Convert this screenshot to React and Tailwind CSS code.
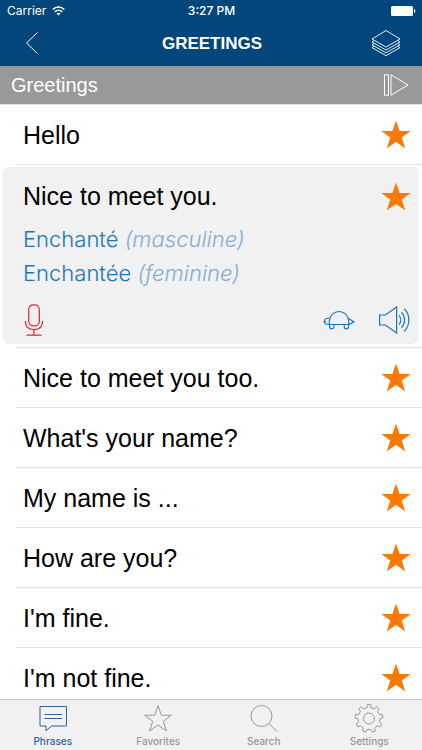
import { useState } from 'react';
import clsx from 'clsx';

const STAR = 'M15 0.5 L18.6 11 L29.7 11 L20.8 17.6 L24.2 28.5 L15 21.8 L5.8 28.5 L9.2 17.6 L0.3 11 L11.4 11 Z';

const initialPhrases = [
    { id: 1, text: 'Hello' },
    {
        id: 2,
        text: 'Nice to meet you.',
        translations: [
            { text: 'Enchanté', note: '(masculine)' },
            { text: 'Enchantée', note: '(feminine)' },
        ],
    },
    { id: 3, text: 'Nice to meet you too.' },
    { id: 4, text: "What's your name?" },
    { id: 5, text: 'My name is ...' },
    { id: 6, text: 'How are you?' },
    { id: 7, text: "I'm fine." },
    { id: 8, text: "I'm not fine." },
];

// outline of a cog wheel, first tooth pointing up
const gearPath = (cx, cy, teeth, outer, inner) => {
    const step = 360 / teeth;
    const points = [];
    for (let i = 0; i < teeth; i++) {
        [
            [-0.25, inner],
            [-0.17, outer],
            [0.17, outer],
            [0.25, inner],
            [0.5, inner - 0.3],
        ].forEach(([offset, r]) => {
            const a = ((i + offset) * step * Math.PI) / 180;
            points.push(`${(cx + r * Math.sin(a)).toFixed(2)} ${(cy - r * Math.cos(a)).toFixed(2)}`);
        });
    }
    return `M${points.join(' L')} Z`;
};

const StatusBar = () => (
    <div className="grid grid-cols-3 items-center h-[22px] pl-[7px] pr-[6px] font-['Inter',sans-serif] text-xs text-white">
        <div className="flex items-center gap-[6px]">
            <span>Carrier</span>
            <svg className="w-[13px] h-[10px]" viewBox="0 0 13 10" fill="none" stroke="currentColor" strokeWidth="1.6">
                <path d="M0.7 3.5 C4 0.2 9 0.2 12.3 3.5" />
                <path d="M2.9 5.9 C5 3.9 8 3.9 10.1 5.9" />
                <path d="M6.5 9.6 L4.5 7.6 C5.6 6.6 7.4 6.6 8.5 7.6 Z" fill="currentColor" stroke="none" />
            </svg>
        </div>
        <span className="text-center font-medium">3:27 PM</span>
        <svg className="w-[25px] h-[10px] justify-self-end" viewBox="0 0 25 10" fill="currentColor">
            <rect width="22" height="10" rx="1.5" />
            <path d="M23 3 C24.8 3.4 24.8 6.6 23 7 Z" />
        </svg>
    </div>
);

const Header = () => (
    <header className="bg-[#03467c] shrink-0">
        <StatusBar />
        <div className="flex items-center justify-between h-11 pl-[23px] pr-[21px] text-white">
            <button aria-label="Back" className="w-[30px] flex">
                <svg className="w-4 h-6" viewBox="0 0 16 24" fill="none" stroke="currentColor" strokeWidth="1">
                    <path d="M14.5 0.5 L3.5 11 L14.5 21.5" />
                </svg>
            </button>
            <h1 className="text-[17px] font-bold">GREETINGS</h1>
            <button aria-label="Cards">
                <svg className="w-[30px] h-[28px]" viewBox="0 0 30 28" fill="none" stroke="currentColor" strokeWidth="0.9">
                    <path d="M15 0.5 L29 9 L15 17 L1 9 Z" />
                    <path d="M3 10.7 L1 12 L15 20 L29 12 L27 10.7" />
                    <path d="M3 13.5 L1 14.8 L15 22.8 L29 14.8 L27 13.5" />
                    <path d="M3 16.3 L1 17.6 L15 25.6 L29 17.6 L27 16.3" />
                </svg>
            </button>
        </div>
    </header>
);

const SectionBar = () => (
    <div className="flex items-center justify-between h-[38px] shrink-0 pl-[11px] pr-[13px] bg-[#999999] text-white">
        <h2 className="text-xl">Greetings</h2>
        <button aria-label="Play all">
            <svg className="w-[26px] h-[22px]" viewBox="0 0 26 22" fill="none" stroke="currentColor" strokeWidth="1">
                <rect x="1.5" y="0.8" width="4" height="20.4" />
                <path d="M8 0.8 V21.2 L25 11 Z" />
            </svg>
        </button>
    </div>
);

const StarButton = ({ active, onClick }) => (
    <button aria-label="Favorite" aria-pressed={active} onClick={onClick} className="shrink-0">
        <svg className={clsx('w-[30px] h-[29px]', active ? 'text-[#ff7800]' : 'text-gray-300')} viewBox="0 0 30 29" fill="currentColor">
            <path d={STAR} />
        </svg>
    </button>
);

const PhraseLine = ({ text, starred, onToggle }) => (
    <div className="flex items-center justify-between">
        <p className="text-[25px] leading-8 text-black">{text}</p>
        <StarButton active={starred} onClick={onToggle} />
    </div>
);

const ExpandedPhrase = ({ phrase, starred, onToggle }) => (
    <li className="pt-[2px] px-[3px]">
        <div className="bg-[#f1f1f1] rounded-md pl-5 pr-2 pt-[13px] pb-2">
            <PhraseLine text={phrase.text} starred={starred} onToggle={onToggle} />
            <div className="pt-[10px] font-['Inter',sans-serif] font-light text-[22px] leading-[34px] text-[#1b75b8]">
                {phrase.translations.map((t) => (
                    <p key={t.text}>
                        {t.text} <em className="text-[#83aed2]">{t.note}</em>
                    </p>
                ))}
            </div>
            <div className="flex items-center justify-between pt-[14px]">
                <button aria-label="Record" className="text-[#d9272e]">
                    <svg className="w-[22px] h-8" viewBox="0 0 22 32" fill="none" stroke="currentColor" strokeWidth="1.2">
                        <rect x="5.7" y="0.8" width="10.6" height="21" rx="4.5" />
                        <path d="M2.4 17 C2.4 22.5 5.8 25.6 11 25.6 C16.2 25.6 19.6 22.5 19.6 17" />
                        <path d="M11 25.6 V31 M3.5 31.2 H18.5" />
                    </svg>
                </button>
                <div className="flex items-center gap-6 text-[#1b75b8]">
                    <button aria-label="Play slowly">
                        <svg className="w-8 h-5" viewBox="0 0 32 20" fill="none" stroke="currentColor" strokeWidth="1.1">
                            <path d="M6.3 14.5 V11 C6.8 5.5 11 1.5 16 1.5 C21 1.5 25.3 5.5 25.8 11 V14.5 Z" />
                            <path d="M6.3 8.5 C3.5 7.7 1.2 9.3 1.2 11.5 C1.2 13.4 3 14.5 6.3 14.5" />
                            <path d="M1.2 11.5 H3.4" />
                            <path d="M25.8 8.8 L31 11.8 L25.8 14.5" />
                            <path d="M6.6 14.5 V16.5 C6.6 19.6 11 19.6 11 16.5 V14.5" />
                            <path d="M21.2 14.5 V16.5 C21.2 19.6 25.6 19.6 25.6 16.5 V14.5" />
                        </svg>
                    </button>
                    <button aria-label="Play">
                        <svg className="w-8 h-7" viewBox="0 0 32 28" fill="none" stroke="currentColor" strokeWidth="1.2">
                            <path d="M0.6 9 H6.4 L17.6 1 V27 L6.4 19 H0.6 Z" />
                            <path d="M20 9.5 C22.4 12 22.4 16 20 18.5" />
                            <path d="M22.5 6.2 C26.5 10.5 26.5 17.5 22.5 21.8" />
                            <path d="M25.2 2.6 C31.4 8.8 31.4 19.2 25.2 25.4" />
                        </svg>
                    </button>
                </div>
            </div>
        </div>
        <div className="mt-[3px] -mr-[3px] ml-[13px] border-b border-[#e3e3e3]" />
    </li>
);

const PhraseRow = ({ phrase, starred, onToggle }) => (
    <li className="ml-4 pl-[7px] pr-[11px] h-[60px] border-b border-[#e3e3e3] flex flex-col justify-center shrink-0">
        <PhraseLine text={phrase.text} starred={starred} onToggle={onToggle} />
    </li>
);

const tabs = [
    {
        label: 'Phrases',
        icon: (
            <>
                <path d="M2 2.5 H28.5 V22 H13.5 L8 26.8 V22 H2 Z" />
                <path d="M6.5 10.5 H24 M6.5 14.5 H24" />
            </>
        ),
    },
    { label: 'Favorites', icon: <path d="M15 1.5 L18.3 11.2 L28.3 11.2 L20.3 17.3 L23.4 27 L15 21 L6.6 27 L9.7 17.3 L1.7 11.2 L11.7 11.2 Z" /> },
    {
        label: 'Search',
        icon: (
            <>
                <circle cx="12.5" cy="12" r="10.5" />
                <path d="M20 19.5 L28 27.5" />
            </>
        ),
    },
    {
        label: 'Settings',
        icon: (
            <>
                <path d={gearPath(15, 14.5, 9, 14, 11.2)} />
                <circle cx="15" cy="14.5" r="5.5" />
            </>
        ),
    },
];

const TabBar = ({ active, onSelect }) => (
    <nav className="grid grid-cols-4 shrink-0 bg-[#f1f1f1] border-t border-[#c4c4c4] pt-1 font-['Inter',sans-serif]">
        {tabs.map((tab) => (
            <button
                key={tab.label}
                onClick={() => onSelect(tab.label)}
                className={clsx('flex flex-col items-center', active === tab.label ? 'text-[#2b659b]' : 'text-[#979797]')}
            >
                <svg className="w-[30px] h-[29px]" viewBox="0 0 30 29" fill="none" stroke="currentColor" strokeWidth="1">
                    {tab.icon}
                </svg>
                <span className="text-[10px] leading-[17px] font-medium">{tab.label}</span>
            </button>
        ))}
    </nav>
);

const App = () => {
    const [tab, setTab] = useState('Phrases');
    const [favorites, setFavorites] = useState(initialPhrases.map((p) => p.id));

    const toggle = (id) => {
        setFavorites((prev) => (prev.includes(id) ? prev.filter((f) => f !== id) : [...prev, id]));
    };

    return (
        <div className="h-screen flex flex-col bg-white font-['Liberation_Sans',Arial,sans-serif]">
            <Header />
            <SectionBar />
            <main className="flex-1 min-h-0 overflow-y-auto [scrollbar-width:none]">
                <ul className="flex flex-col border-t border-[#e3e3e3]">
                    {initialPhrases.map((phrase) => {
                        const Row = phrase.translations ? ExpandedPhrase : PhraseRow;
                        return (
                            <Row
                                key={phrase.id}
                                phrase={phrase}
                                starred={favorites.includes(phrase.id)}
                                onToggle={() => toggle(phrase.id)}
                            />
                        );
                    })}
                </ul>
            </main>
            <TabBar active={tab} onSelect={setTab} />
        </div>
    );
};

export default App;
